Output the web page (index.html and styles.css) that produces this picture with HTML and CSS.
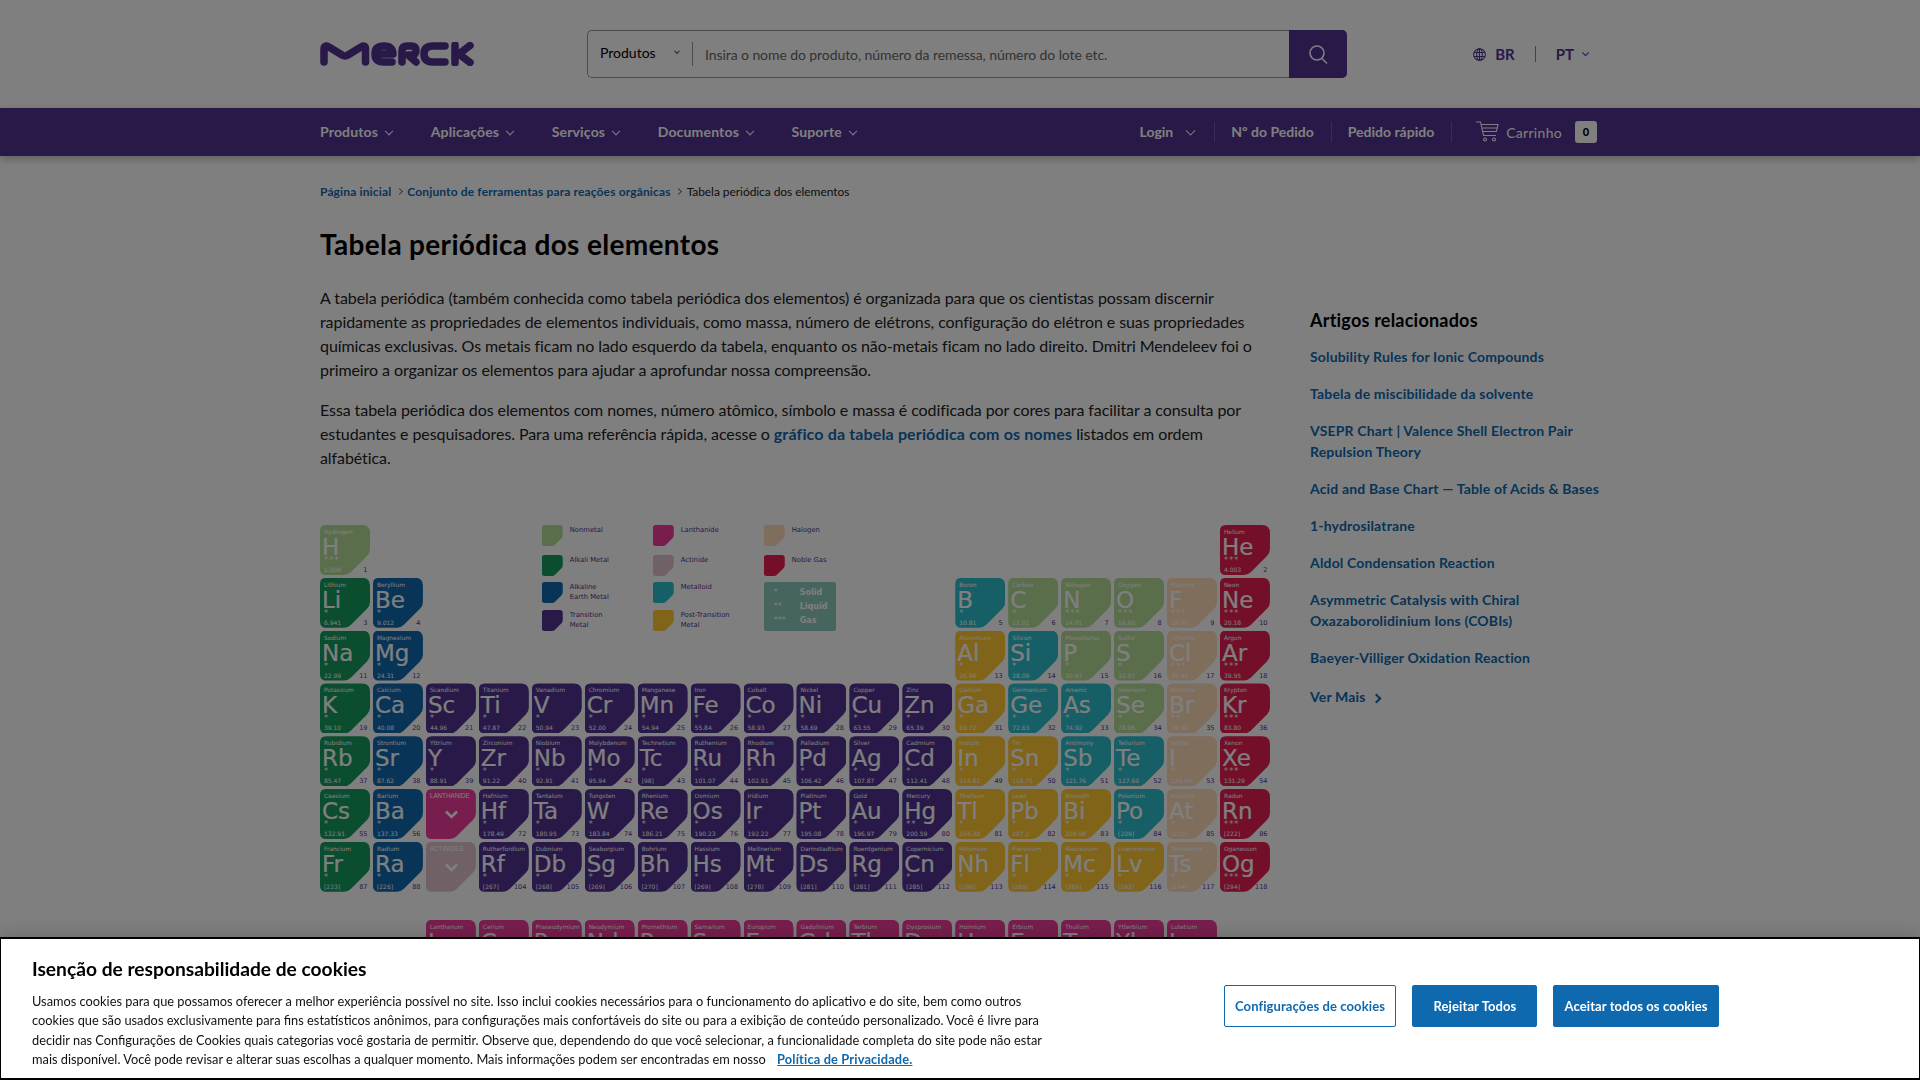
FILE: index.html
```html
<!DOCTYPE html>
<html lang="pt">
<head>
<meta charset="utf-8">
<title>Tabela periódica dos elementos</title>
<link rel="stylesheet" href="styles.css">
</head>
<body>
<header class="top">
  <div class="wrap top-row">
    <svg class="logo" viewBox="0 0 154 24" aria-label="Merck"><g fill="none" stroke="#503291" stroke-width="7.500" stroke-linecap="round" stroke-linejoin="round"><path d="M4 20V7Q4 2.500 9 5L22 13Q25 15 28 13L41 5Q45.500 2.500 45.500 7V20"/><path d="M55 12H73Q72.500 4 64 4Q55 4 55 12Q55 20 64 20H72"/><path d="M82 20V9Q82 4 87 4H91Q96 4 96 8.500Q96 13 91 13H88L96 20"/><path d="M125 4H113Q104 4 104 12Q104 20 113 20H125"/><path d="M135 3V21M150 3.500L139 12L150 20.500"/></g></svg>
    <form class="search">
      <div class="scope"><span>Produtos</span><i class="chev chev-blue"></i></div>
      <div class="query">Insira o nome do produto, número da remessa, número do lote etc.</div>
      <button class="search-btn" type="button"><svg width="22" height="22" viewBox="0 0 22 22" fill="none" stroke="#fff" stroke-width="1.600"><circle cx="10" cy="10" r="7"/><path d="M15 15.500L20 20.500"/></svg></button>
    </form>
    <div class="locale">
      <svg width="13" height="13" viewBox="0 0 14 14" fill="none" stroke="#503291" stroke-width="1.100"><circle cx="7" cy="7" r="6.300"/><ellipse cx="7" cy="7" rx="3" ry="6.300"/><path d="M1 4.800H13M1 9.200H13M7 .700V13.300"/></svg>
      <b>BR</b><span class="locale-sep"></span><b>PT</b><i class="chev chev-purple"></i>
    </div>
  </div>
</header>
<nav class="nav">
  <div class="wrap nav-row">
    <ul class="nav-main">
      <li>Produtos<i class="chev"></i></li>
      <li>Aplicações<i class="chev"></i></li>
      <li>Serviços<i class="chev"></i></li>
      <li>Documentos<i class="chev"></i></li>
      <li>Suporte<i class="chev"></i></li>
    </ul>
    <ul class="nav-user">
      <li class="login">Login<i class="chev chev-wide"></i></li>
      <li>Nº do Pedido</li>
      <li>Pedido rápido</li>
      <li class="cart">
        <svg width="23" height="21" viewBox="0 0 23 21" fill="none" stroke="#fff" stroke-width="1.100"><path d="M0 1H4.500L7.500 14.500H20M5 3.500H22L20.500 10.500H6.500M6.500 7H21.500"/><circle cx="9" cy="18.500" r="1.500"/><circle cx="18" cy="18.500" r="1.500"/></svg>
        <span class="cart-label">Carrinho</span><span class="badge">0</span>
      </li>
    </ul>
  </div>
</nav>
<div class="wrap">
  <ol class="crumbs">
    <li><a href="#">Página inicial</a></li><li class="sep"><i class="chev chev-right"></i></li>
    <li><a href="#">Conjunto de ferramentas para reações orgânicas</a></li><li class="sep"><i class="chev chev-right"></i></li>
    <li>Tabela periódica dos elementos</li>
  </ol>
  <h1>Tabela periódica dos elementos</h1>
  <div class="cols">
    <main class="content">
      <p>A tabela periódica (também conhecida como tabela periódica dos elementos) é organizada para que os cientistas possam discernir rapidamente as propriedades de elementos individuais, como massa, número de elétrons, configuração do elétron e suas propriedades químicas exclusivas. Os metais ficam no lado esquerdo da tabela, enquanto os não-metais ficam no lado direito. Dmitri Mendeleev foi o primeiro a organizar os elementos para ajudar a aprofundar nossa compreensão.</p>
      <p>Essa tabela periódica dos elementos com nomes, número atômico, símbolo e massa é codificada por cores para facilitar a consulta por estudantes e pesquisadores. Para uma referência rápida, acesse o <a href="#">gráfico da tabela periódica com os nomes</a> listados em ordem alfabética.</p>
      <section class="ptable">
        <div class="legend">
          <div class="lg"><i class="sw nm"></i>Nonmetal</div>
          <div class="lg"><i class="sw la"></i>Lanthanide</div>
          <div class="lg"><i class="sw ha"></i>Halogen</div>
          <div class="lg"><i class="sw ak"></i>Alkali Metal</div>
          <div class="lg"><i class="sw ac"></i>Actinide</div>
          <div class="lg"><i class="sw ng"></i>Noble Gas</div>
          <div class="lg"><i class="sw ae"></i>Alkaline<br>Earth Metal</div>
          <div class="lg"><i class="sw md"></i>Metalloid</div>
          <div class="states"><span>*</span><b>Solid</b><span>**</span><b>Liquid</b><span>***</span><b>Gas</b></div>
          <div class="lg"><i class="sw tm"></i>Transition<br>Metal</div>
          <div class="lg"><i class="sw pt"></i>Post-Transition<br>Metal</div>
        </div>
        <div class="el nm"><span class="n">Hydrogen</span><span class="s">H</span><span class="t">***</span><span class="m">1.008</span><span class="z">1</span></div>
        <div class="el ng c18"><span class="n">Helium</span><span class="s">He</span><span class="t">***</span><span class="m">4.003</span><span class="z">2</span></div>
        <div class="el ak"><span class="n">Lithium</span><span class="s">Li</span><span class="t">*</span><span class="m">6.941</span><span class="z">3</span></div>
        <div class="el ae"><span class="n">Beryllium</span><span class="s">Be</span><span class="t">*</span><span class="m">9.012</span><span class="z">4</span></div>
        <div class="el md c13"><span class="n">Boron</span><span class="s">B</span><span class="t">*</span><span class="m">10.81</span><span class="z">5</span></div>
        <div class="el nm"><span class="n">Carbon</span><span class="s">C</span><span class="t">*</span><span class="m">12.01</span><span class="z">6</span></div>
        <div class="el nm"><span class="n">Nitrogen</span><span class="s">N</span><span class="t">***</span><span class="m">14.01</span><span class="z">7</span></div>
        <div class="el nm"><span class="n">Oxygen</span><span class="s">O</span><span class="t">***</span><span class="m">16.00</span><span class="z">8</span></div>
        <div class="el ha"><span class="n">Fluorine</span><span class="s">F</span><span class="t">***</span><span class="m">19.00</span><span class="z">9</span></div>
        <div class="el ng"><span class="n">Neon</span><span class="s">Ne</span><span class="t">***</span><span class="m">20.18</span><span class="z">10</span></div>
        <div class="el ak"><span class="n">Sodium</span><span class="s">Na</span><span class="t">*</span><span class="m">22.99</span><span class="z">11</span></div>
        <div class="el ae"><span class="n">Magnesium</span><span class="s">Mg</span><span class="t">*</span><span class="m">24.31</span><span class="z">12</span></div>
        <div class="el pt c13"><span class="n">Aluminium</span><span class="s">Al</span><span class="t">*</span><span class="m">26.98</span><span class="z">13</span></div>
        <div class="el md"><span class="n">Silicon</span><span class="s">Si</span><span class="t">*</span><span class="m">28.09</span><span class="z">14</span></div>
        <div class="el nm"><span class="n">Phosphorus</span><span class="s">P</span><span class="t">*</span><span class="m">30.97</span><span class="z">15</span></div>
        <div class="el nm"><span class="n">Sulfur</span><span class="s">S</span><span class="t">*</span><span class="m">32.07</span><span class="z">16</span></div>
        <div class="el ha"><span class="n">Chlorine</span><span class="s">Cl</span><span class="t">***</span><span class="m">35.45</span><span class="z">17</span></div>
        <div class="el ng"><span class="n">Argon</span><span class="s">Ar</span><span class="t">***</span><span class="m">39.95</span><span class="z">18</span></div>
        <div class="el ak"><span class="n">Potassium</span><span class="s">K</span><span class="t">*</span><span class="m">39.10</span><span class="z">19</span></div>
        <div class="el ae"><span class="n">Calcium</span><span class="s">Ca</span><span class="t">*</span><span class="m">40.08</span><span class="z">20</span></div>
        <div class="el tm"><span class="n">Scandium</span><span class="s">Sc</span><span class="t">*</span><span class="m">44.96</span><span class="z">21</span></div>
        <div class="el tm"><span class="n">Titanium</span><span class="s">Ti</span><span class="t">*</span><span class="m">47.87</span><span class="z">22</span></div>
        <div class="el tm"><span class="n">Vanadium</span><span class="s">V</span><span class="t">*</span><span class="m">50.94</span><span class="z">23</span></div>
        <div class="el tm"><span class="n">Chromium</span><span class="s">Cr</span><span class="t">*</span><span class="m">52.00</span><span class="z">24</span></div>
        <div class="el tm"><span class="n">Manganese</span><span class="s">Mn</span><span class="t">*</span><span class="m">54.94</span><span class="z">25</span></div>
        <div class="el tm"><span class="n">Iron</span><span class="s">Fe</span><span class="t">*</span><span class="m">55.84</span><span class="z">26</span></div>
        <div class="el tm"><span class="n">Cobalt</span><span class="s">Co</span><span class="t">*</span><span class="m">58.93</span><span class="z">27</span></div>
        <div class="el tm"><span class="n">Nickel</span><span class="s">Ni</span><span class="t">*</span><span class="m">58.69</span><span class="z">28</span></div>
        <div class="el tm"><span class="n">Copper</span><span class="s">Cu</span><span class="t">*</span><span class="m">63.55</span><span class="z">29</span></div>
        <div class="el tm"><span class="n">Zinc</span><span class="s">Zn</span><span class="t">*</span><span class="m">65.39</span><span class="z">30</span></div>
        <div class="el pt"><span class="n">Gallium</span><span class="s">Ga</span><span class="t">*</span><span class="m">69.72</span><span class="z">31</span></div>
        <div class="el md"><span class="n">Germanium</span><span class="s">Ge</span><span class="t">*</span><span class="m">72.63</span><span class="z">32</span></div>
        <div class="el md"><span class="n">Arsenic</span><span class="s">As</span><span class="t">*</span><span class="m">74.92</span><span class="z">33</span></div>
        <div class="el nm"><span class="n">Selenium</span><span class="s">Se</span><span class="t">*</span><span class="m">78.96</span><span class="z">34</span></div>
        <div class="el ha"><span class="n">Bromine</span><span class="s">Br</span><span class="t">**</span><span class="m">79.90</span><span class="z">35</span></div>
        <div class="el ng"><span class="n">Krypton</span><span class="s">Kr</span><span class="t">***</span><span class="m">83.80</span><span class="z">36</span></div>
        <div class="el ak"><span class="n">Rubidium</span><span class="s">Rb</span><span class="t">*</span><span class="m">85.47</span><span class="z">37</span></div>
        <div class="el ae"><span class="n">Strontium</span><span class="s">Sr</span><span class="t">*</span><span class="m">87.62</span><span class="z">38</span></div>
        <div class="el tm"><span class="n">Yttrium</span><span class="s">Y</span><span class="t">*</span><span class="m">88.91</span><span class="z">39</span></div>
        <div class="el tm"><span class="n">Zirconium</span><span class="s">Zr</span><span class="t">*</span><span class="m">91.22</span><span class="z">40</span></div>
        <div class="el tm"><span class="n">Niobium</span><span class="s">Nb</span><span class="t">*</span><span class="m">92.91</span><span class="z">41</span></div>
        <div class="el tm"><span class="n">Molybdenum</span><span class="s">Mo</span><span class="t">*</span><span class="m">95.94</span><span class="z">42</span></div>
        <div class="el tm"><span class="n">Technetium</span><span class="s">Tc</span><span class="t">*</span><span class="m">[98]</span><span class="z">43</span></div>
        <div class="el tm"><span class="n">Ruthenium</span><span class="s">Ru</span><span class="t">*</span><span class="m">101.07</span><span class="z">44</span></div>
        <div class="el tm"><span class="n">Rhodium</span><span class="s">Rh</span><span class="t">*</span><span class="m">102.91</span><span class="z">45</span></div>
        <div class="el tm"><span class="n">Palladium</span><span class="s">Pd</span><span class="t">*</span><span class="m">106.42</span><span class="z">46</span></div>
        <div class="el tm"><span class="n">Silver</span><span class="s">Ag</span><span class="t">*</span><span class="m">107.87</span><span class="z">47</span></div>
        <div class="el tm"><span class="n">Cadmium</span><span class="s">Cd</span><span class="t">*</span><span class="m">112.41</span><span class="z">48</span></div>
        <div class="el pt"><span class="n">Indium</span><span class="s">In</span><span class="t">*</span><span class="m">114.82</span><span class="z">49</span></div>
        <div class="el pt"><span class="n">Tin</span><span class="s">Sn</span><span class="t">*</span><span class="m">118.71</span><span class="z">50</span></div>
        <div class="el md"><span class="n">Antimony</span><span class="s">Sb</span><span class="t">*</span><span class="m">121.76</span><span class="z">51</span></div>
        <div class="el md"><span class="n">Tellurium</span><span class="s">Te</span><span class="t">*</span><span class="m">127.60</span><span class="z">52</span></div>
        <div class="el ha"><span class="n">Iodine</span><span class="s">I</span><span class="t">*</span><span class="m">126.90</span><span class="z">53</span></div>
        <div class="el ng"><span class="n">Xenon</span><span class="s">Xe</span><span class="t">***</span><span class="m">131.29</span><span class="z">54</span></div>
        <div class="el ak"><span class="n">Caesium</span><span class="s">Cs</span><span class="t">*</span><span class="m">132.91</span><span class="z">55</span></div>
        <div class="el ae"><span class="n">Barium</span><span class="s">Ba</span><span class="t">*</span><span class="m">137.33</span><span class="z">56</span></div>
        <div class="el la series"><span class="n">LANTHANIDE</span><svg class="series-arrow" viewBox="0 0 14 9"><path d="M1.500 1.500L7 7L12.500 1.500"/></svg></div>
        <div class="el tm"><span class="n">Hafnium</span><span class="s">Hf</span><span class="t">*</span><span class="m">178.49</span><span class="z">72</span></div>
        <div class="el tm"><span class="n">Tantalum</span><span class="s">Ta</span><span class="t">*</span><span class="m">180.95</span><span class="z">73</span></div>
        <div class="el tm"><span class="n">Tungsten</span><span class="s">W</span><span class="t">*</span><span class="m">183.84</span><span class="z">74</span></div>
        <div class="el tm"><span class="n">Rhenium</span><span class="s">Re</span><span class="t">*</span><span class="m">186.21</span><span class="z">75</span></div>
        <div class="el tm"><span class="n">Osmium</span><span class="s">Os</span><span class="t">*</span><span class="m">190.23</span><span class="z">76</span></div>
        <div class="el tm"><span class="n">Iridium</span><span class="s">Ir</span><span class="t">*</span><span class="m">192.22</span><span class="z">77</span></div>
        <div class="el tm"><span class="n">Platinum</span><span class="s">Pt</span><span class="t">*</span><span class="m">195.08</span><span class="z">78</span></div>
        <div class="el tm"><span class="n">Gold</span><span class="s">Au</span><span class="t">*</span><span class="m">196.97</span><span class="z">79</span></div>
        <div class="el tm"><span class="n">Mercury</span><span class="s">Hg</span><span class="t">**</span><span class="m">200.59</span><span class="z">80</span></div>
        <div class="el pt"><span class="n">Thallium</span><span class="s">Tl</span><span class="t">*</span><span class="m">204.38</span><span class="z">81</span></div>
        <div class="el pt"><span class="n">Lead</span><span class="s">Pb</span><span class="t">*</span><span class="m">207.2</span><span class="z">82</span></div>
        <div class="el pt"><span class="n">Bismuth</span><span class="s">Bi</span><span class="t">*</span><span class="m">208.98</span><span class="z">83</span></div>
        <div class="el md"><span class="n">Polonium</span><span class="s">Po</span><span class="t">*</span><span class="m">[209]</span><span class="z">84</span></div>
        <div class="el ha"><span class="n">Astatine</span><span class="s">At</span><span class="t">*</span><span class="m">[210]</span><span class="z">85</span></div>
        <div class="el ng"><span class="n">Radon</span><span class="s">Rn</span><span class="t">***</span><span class="m">[222]</span><span class="z">86</span></div>
        <div class="el ak"><span class="n">Francium</span><span class="s">Fr</span><span class="t">*</span><span class="m">[223]</span><span class="z">87</span></div>
        <div class="el ae"><span class="n">Radium</span><span class="s">Ra</span><span class="t">*</span><span class="m">[226]</span><span class="z">88</span></div>
        <div class="el ac series"><span class="n">ACTINIDES</span><svg class="series-arrow" viewBox="0 0 14 9"><path d="M1.500 1.500L7 7L12.500 1.500"/></svg></div>
        <div class="el tm"><span class="n">Rutherfordium</span><span class="s">Rf</span><span class="t">*</span><span class="m">[267]</span><span class="z">104</span></div>
        <div class="el tm"><span class="n">Dubnium</span><span class="s">Db</span><span class="t">*</span><span class="m">[268]</span><span class="z">105</span></div>
        <div class="el tm"><span class="n">Seaborgium</span><span class="s">Sg</span><span class="t">*</span><span class="m">[269]</span><span class="z">106</span></div>
        <div class="el tm"><span class="n">Bohrium</span><span class="s">Bh</span><span class="t">*</span><span class="m">[270]</span><span class="z">107</span></div>
        <div class="el tm"><span class="n">Hassium</span><span class="s">Hs</span><span class="t">*</span><span class="m">[269]</span><span class="z">108</span></div>
        <div class="el tm"><span class="n">Meitnerium</span><span class="s">Mt</span><span class="t">*</span><span class="m">[278]</span><span class="z">109</span></div>
        <div class="el tm"><span class="n">Darmstadtium</span><span class="s">Ds</span><span class="t">*</span><span class="m">[281]</span><span class="z">110</span></div>
        <div class="el tm"><span class="n">Roentgenium</span><span class="s">Rg</span><span class="t">*</span><span class="m">[281]</span><span class="z">111</span></div>
        <div class="el tm"><span class="n">Copernicium</span><span class="s">Cn</span><span class="t">*</span><span class="m">[285]</span><span class="z">112</span></div>
        <div class="el pt"><span class="n">Nihonium</span><span class="s">Nh</span><span class="t">*</span><span class="m">[286]</span><span class="z">113</span></div>
        <div class="el pt"><span class="n">Flerovium</span><span class="s">Fl</span><span class="t">*</span><span class="m">[289]</span><span class="z">114</span></div>
        <div class="el pt"><span class="n">Moscovium</span><span class="s">Mc</span><span class="t">*</span><span class="m">[289]</span><span class="z">115</span></div>
        <div class="el pt"><span class="n">Livermorium</span><span class="s">Lv</span><span class="t">*</span><span class="m">[293]</span><span class="z">116</span></div>
        <div class="el ha"><span class="n">Tennessine</span><span class="s">Ts</span><span class="t">*</span><span class="m">[294]</span><span class="z">117</span></div>
        <div class="el ng"><span class="n">Oganesson</span><span class="s">Og</span><span class="t">***</span><span class="m">[294]</span><span class="z">118</span></div>
      </section>
      <section class="ptable lanth">
        <div class="el la c3"><span class="n">Lanthanum</span><span class="s">La</span><span class="t">*</span><span class="m">138.91</span><span class="z">57</span></div>
        <div class="el la"><span class="n">Cerium</span><span class="s">Ce</span><span class="t">*</span><span class="m">140.12</span><span class="z">58</span></div>
        <div class="el la"><span class="n">Praseodymium</span><span class="s">Pr</span><span class="t">*</span><span class="m">140.91</span><span class="z">59</span></div>
        <div class="el la"><span class="n">Neodymium</span><span class="s">Nd</span><span class="t">*</span><span class="m">144.24</span><span class="z">60</span></div>
        <div class="el la"><span class="n">Promethium</span><span class="s">Pm</span><span class="t">*</span><span class="m">[145]</span><span class="z">61</span></div>
        <div class="el la"><span class="n">Samarium</span><span class="s">Sm</span><span class="t">*</span><span class="m">150.36</span><span class="z">62</span></div>
        <div class="el la"><span class="n">Europium</span><span class="s">Eu</span><span class="t">*</span><span class="m">151.96</span><span class="z">63</span></div>
        <div class="el la"><span class="n">Gadolinium</span><span class="s">Gd</span><span class="t">*</span><span class="m">157.25</span><span class="z">64</span></div>
        <div class="el la"><span class="n">Terbium</span><span class="s">Tb</span><span class="t">*</span><span class="m">158.93</span><span class="z">65</span></div>
        <div class="el la"><span class="n">Dysprosium</span><span class="s">Dy</span><span class="t">*</span><span class="m">162.50</span><span class="z">66</span></div>
        <div class="el la"><span class="n">Holmium</span><span class="s">Ho</span><span class="t">*</span><span class="m">164.93</span><span class="z">67</span></div>
        <div class="el la"><span class="n">Erbium</span><span class="s">Er</span><span class="t">*</span><span class="m">167.26</span><span class="z">68</span></div>
        <div class="el la"><span class="n">Thulium</span><span class="s">Tm</span><span class="t">*</span><span class="m">168.93</span><span class="z">69</span></div>
        <div class="el la"><span class="n">Ytterbium</span><span class="s">Yb</span><span class="t">*</span><span class="m">173.04</span><span class="z">70</span></div>
        <div class="el la"><span class="n">Lutetium</span><span class="s">Lu</span><span class="t">*</span><span class="m">174.97</span><span class="z">71</span></div>
      </section>
    </main>
    <aside class="side">
      <h2>Artigos relacionados</h2>
      <ul class="side-list">
        <li><a href="#">Solubility Rules for Ionic Compounds</a></li>
        <li><a href="#">Tabela de miscibilidade da solvente</a></li>
        <li><a href="#">VSEPR Chart | Valence Shell Electron Pair Repulsion Theory</a></li>
        <li><a href="#">Acid and Base Chart — Table of Acids &amp; Bases</a></li>
        <li><a href="#">1-hydrosilatrane</a></li>
        <li><a href="#">Aldol Condensation Reaction</a></li>
        <li><a href="#">Asymmetric Catalysis with Chiral Oxazaborolidinium Ions (COBIs)</a></li>
        <li><a href="#">Baeyer-Villiger Oxidation Reaction</a></li>
      </ul>
      <a class="more" href="#">Ver Mais<i class="chev chev-more"></i></a>
    </aside>
  </div>
</div>
<div class="scrim"></div>
<div class="cookie">
  <div class="cookie-text">
    <h3>Isenção de responsabilidade de cookies</h3>
    <p>Usamos cookies para que possamos oferecer a melhor experiência possível no site. Isso inclui cookies necessários para o funcionamento do aplicativo e do site, bem como outros cookies que são usados exclusivamente para fins estatísticos anônimos, para configurações mais confortáveis do site ou para a exibição de conteúdo personalizado. Você é livre para decidir nas Configurações de Cookies quais categorias você gostaria de permitir. Observe que, dependendo do que você selecionar, a funcionalidade completa do site pode não estar mais disponível. Você pode revisar e alterar suas escolhas a qualquer momento. Mais informações podem ser encontradas em nosso <a href="#">Política de Privacidade.</a></p>
  </div>
  <div class="cookie-btns">
    <button class="btn btn-line" type="button">Configurações de cookies</button>
    <button class="btn btn-reject" type="button">Rejeitar Todos</button>
    <button class="btn btn-accept" type="button">Aceitar todos os cookies</button>
  </div>
</div>
</body>
</html>
```
FILE: styles.css
```css
* { box-sizing: border-box; }
html, body { margin: 0; height: 1080px; overflow: hidden; }
body { font-family: Lato, "Open Sans", sans-serif; font-size: 16px; color: #222; background: #fff; }
ul, ol { list-style: none; margin: 0; padding: 0; }
a { color: #0f69af; text-decoration: none; font-weight: 700; letter-spacing: .012em; }
.wrap { width: 1280px; margin: 0 auto; }

.chev { display: inline-block; width: 6px; height: 6px; border-right: 1px solid currentColor; border-bottom: 1px solid currentColor; transform: rotate(45deg) translate(-2px, -2px); margin-left: 8px; }
.chev-blue { color: #0f69af; width: 4px; height: 4px; margin: 3px 0 0; border-width: 1.5px; }
.chev-purple { color: #503291; width: 5px; height: 5px; margin: 3px 0 0 9px; }
.chev-wide { width: 7px; height: 7px; margin-left: 14px; }
.chev-right { transform: rotate(-45deg); margin: 0 0 1px; width: 5px; height: 5px; color: #777; }
.chev-more { transform: rotate(-45deg); width: 7px; height: 7px; border-width: 2px; margin-left: 7px; }

.top-row { display: flex; align-items: center; height: 108px; padding-right: 12px; }
.logo { width: 154px; height: 24px; flex: none; }
.search { display: flex; width: 760px; height: 48px; margin-left: 113px; border: 1px solid #999; border-right: 0; border-radius: 5px; }
.scope { width: 104px; flex: none; display: flex; align-items: center; justify-content: space-between; padding: 0 13px 3px 12px; height: 46px; font-size: 14px; color: #000; }
.query { flex: 1; margin: 11px 0; border-left: 1px solid #999; padding-left: 12px; font-size: 14px; letter-spacing: -.08px; line-height: 26px; color: #666; height: 24px; }
.search-btn { width: 58px; height: 48px; margin: -1px 0; flex: none; border: 0; background: #503291; border-radius: 0 5px 5px 0; display: flex; align-items: center; justify-content: center; padding: 0; }
.locale { margin-left: auto; display: flex; align-items: center; font-size: 15px; color: #503291; }
.locale b:first-of-type { margin-left: 9px; }
.locale-sep { width: 1px; height: 16px; background: #888; margin: 0 20px; }

.nav { background: #503291; height: 48px; color: #fff; box-shadow: 0 3px 8px rgba(0,0,0,.25); position: relative; }
.nav-row { display: flex; justify-content: space-between; align-items: center; height: 48px; padding: 0 3px 1px 0; font-size: 14px; font-weight: 700; }
.nav-main { display: flex; gap: 38.500px; letter-spacing: .012em; }
.nav-user { display: flex; align-items: center; }
.nav-user > li { padding: 0 17px 0 16px; height: 20px; line-height: 20px; border-left: 1px solid rgba(255,255,255,.2); }
.nav-user > li.login { border: 0; padding: 0 20px 0 0; }
.nav-user > li.cart { display: flex; align-items: center; padding: 0 0 0 24px; }
.cart-label { font-weight: 400; letter-spacing: .3px; margin: 2px 13px 0 7px; }
.badge { width: 22px; height: 22px; border-radius: 3px; background: #fff; color: #000; font-size: 11px; font-weight: 900; text-align: center; line-height: 22px; }

.crumbs { display: flex; align-items: center; height: 18px; margin-top: 27px; font-size: 12px; line-height: 18px; letter-spacing: -.005em; }
.crumbs .sep { width: 16px; display: flex; justify-content: center; align-items: center; }
h1 { margin: 26px 0 25px; font-size: 28px; line-height: 34px; font-weight: 700; color: #000; letter-spacing: .012em; }
.cols { display: flex; gap: 40px; }
.content { width: 950px; flex: none; }
.content p { margin: 0 0 16px; line-height: 24px; letter-spacing: -.08px; }
.content p a { letter-spacing: .009em; }
.ptable { display: grid; grid-template-columns: repeat(18, 50px); grid-auto-rows: 50px; column-gap: 2.95px; row-gap: 2.8px; margin-top: 55px; }
.ptable.lanth { margin-top: 28px; }
.c3 { grid-column: 3; }
.c13 { grid-column: 13; }
.c18 { grid-column: 18; }

.el { display: grid; grid-template-columns: 1fr auto; grid-template-rows: 12px 18px 10px 10px; color: #fff; font-family: "DejaVu Sans", sans-serif; }
.el::before { content: ""; grid-area: 1 / 1 / 5 / 3; background: var(--c); clip-path: path("M6 0H42Q50 0 50 8V24Q50 28 47 31L31 47Q28 50 24 50H6Q0 50 0 44V6Q0 0 6 0Z"); }
.el > * { position: relative; }
.n { grid-area: 1 / 1 / 2 / 3; font-size: 5.900px; line-height: 12px; padding: 1px 0 0 4px; white-space: nowrap; }
.s { grid-area: 2 / 1 / 3 / 3; font-size: 23px; line-height: 15px; padding: 3px 0 0 2px; -webkit-text-stroke: .2px #fff; }
.t { grid-area: 3 / 1 / 4 / 3; font-size: 8px; line-height: 8px; letter-spacing: 1.200px; padding-left: 4px; align-self: end; }
.m { grid-area: 4 / 1 / 5 / 2; font-size: 6px; line-height: 10px; padding-left: 4px; white-space: nowrap; }
.z { grid-area: 4 / 2 / 5 / 3; font-size: 6.500px; line-height: 10px; padding-right: 2.500px; color: #503291; }
.series { grid-template-rows: 12px 38px; grid-template-columns: 1fr; }
.series::before { grid-area: 1 / 1 / 3 / 2; }
.series .n { grid-area: 1 / 1 / 2 / 2; font-family: "Liberation Sans", sans-serif; font-size: 6.300px; }
.series-arrow { grid-area: 2 / 1 / 3 / 2; width: 15px; height: 9px; margin: 9px 0 0 18px; fill: none; stroke: #fff; stroke-width: 2.600; }

.nm { --c: #b4dc96; }
.ak { --c: #149b5f; }
.ae { --c: #0f69af; }
.tm { --c: #503291; }
.la { --c: #f13c9c; }
.ac { --c: #e1c3cd; }
.md { --c: #2dbecd; }
.pt { --c: #ffc832; }
.ha { --c: #ffdcb9; }
.ng { --c: #e61e50; }

.legend { grid-area: 1 / 5 / 4 / 13; display: grid; grid-template-columns: repeat(3, 111px); grid-template-rows: 30px 27px 28px 30px; padding-left: 10px; font-family: "DejaVu Sans", sans-serif; font-size: 6.800px; line-height: 10px; color: #503291; }
.lg { padding-left: 28px; }
.sw { float: left; width: 21px; height: 21px; margin: 0 0 0 -28px; background: var(--c); clip-path: path("M3 0H18Q21 0 21 3V10Q21 12 19.500 13.500L13.500 19.500Q12 21 10 21H3Q0 21 0 18V3Q0 0 3 0Z"); }
.states { grid-row: 3 / 5; grid-column: 3; display: grid; grid-template-columns: 26px 1fr; align-content: center; row-gap: 4px; width: 72px; height: 49px; background: #8ccabd; color: #fff; border-radius: 2px; padding-left: 10px; font-size: 8px; line-height: 10px; }
.states b { font-weight: 700; }

.side { width: 290px; padding-top: 22px; font-size: 14px; }
.side h2 { margin: 0 0 14px; font-size: 18px; line-height: 24px; font-weight: 700; color: #000; letter-spacing: .012em; }
.side-list li { margin-bottom: 16px; line-height: 21px; }
.more { display: block; line-height: 21px; margin-top: 18px; font-size: 14px; }

.scrim { position: fixed; inset: 0; background: rgba(0,0,0,.5); }
.cookie { position: fixed; left: 0; right: 0; bottom: 0; height: 143px; background: #fff; border: 2px solid #000; border-width: 2px 1px; box-shadow: 0 0 18px rgba(0,0,0,.2); display: flex; color: #111; }
.cookie-text { width: 1222.500px; flex: none; padding: 16px 0 0 31px; }
.cookie-text h3 { margin: 0 0 9px; font-size: 19.200px; line-height: 28px; font-weight: 700; color: #000; }
.cookie-text p { margin: 0; width: 1020px; font-size: 12.800px; line-height: 19.400px; }
.cookie-text a { text-decoration: underline; margin-left: 8px; }
.cookie-btns { display: flex; gap: 16px; margin-top: 46px; align-items: flex-start; }
.btn { height: 42px; padding: 0 10.500px; border: 1px solid #0f69af; border-radius: 2px; background: #0f69af; color: #fff; font: 700 13px Lato, sans-serif; letter-spacing: .1px; }
.btn-line { background: #fff; color: #0f69af; }
.btn-reject { width: 125px; }
.btn-accept { padding: 0 10px; }
```
